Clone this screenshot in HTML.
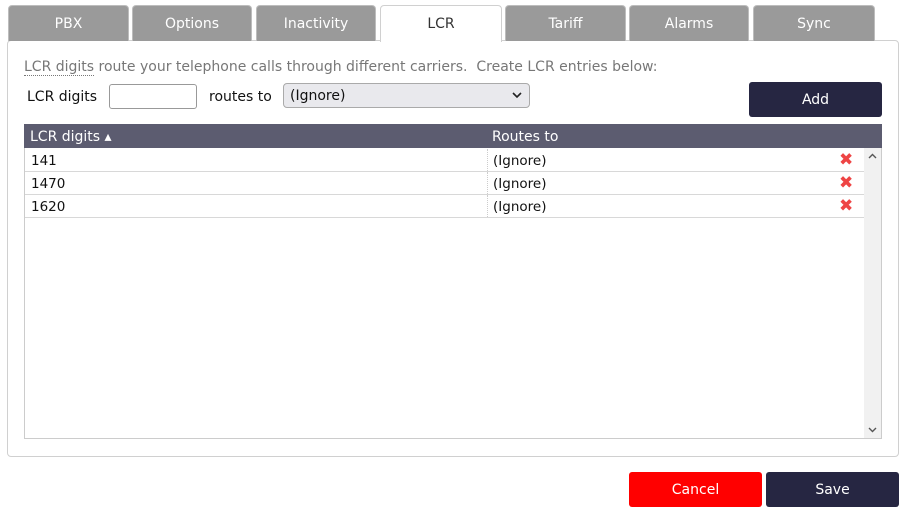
<!DOCTYPE html><html><head><style>
body{margin:0;width:905px;height:513px;background:#fff;font-family:"DejaVu Sans","Liberation Sans",sans-serif;font-size:14px;color:#111;position:relative;overflow:hidden}
.a{position:absolute;box-sizing:border-box}
.tab{top:5px;height:36px;background:#9a9a9a;color:#fff;border:1px solid #bdbdbd;border-bottom:none;border-radius:4px 4px 0 0;text-align:center;line-height:37px;font-size:14px}
.row{left:25px;width:839px;height:23px;border-bottom:1px solid #d8d8d8;line-height:24px;font-size:13.5px}
.x{color:#ee4444;font-weight:bold;font-size:17px;position:absolute;left:814px;top:0;line-height:23px}
</style></head><body>
<div class="a" style="left:7px;top:40px;width:892px;height:417px;border:1px solid #d0d0d0;border-radius:4px"></div>
<div class="a tab" style="left:8px;width:121px">PBX</div>
<div class="a tab" style="left:132px;width:120px">Options</div>
<div class="a tab" style="left:256px;width:120px">Inactivity</div>
<div class="a tab" style="left:380px;width:122px;background:#fff;color:#333;height:37px;border-color:#d0d0d0">LCR</div>
<div class="a tab" style="left:505px;width:121px">Tariff</div>
<div class="a tab" style="left:629px;width:120px">Alarms</div>
<div class="a tab" style="left:753px;width:122px">Sync</div>
<div class="a" style="left:24px;top:59px;color:#777;font-size:14px;white-space:nowrap"><span style="border-bottom:1px dotted #777">LCR digits</span> route your telephone calls through different carriers.&nbsp; Create LCR entries below:</div>
<div class="a" style="left:27px;top:89px">LCR digits</div>
<div class="a" style="left:109px;top:84px;width:88px;height:25px;border:1px solid #999;border-radius:3px"></div>
<div class="a" style="left:209px;top:89px">routes to</div>
<div class="a" style="left:283px;top:83px;width:247px;height:25px;border:1px solid #aaa;border-radius:4px;background:#e9e9ed;padding:4px 6px">(Ignore)<svg style="position:absolute;right:7px;top:8px" width="10" height="7"><path d="M1 1L5 5L9 1" stroke="#222" stroke-width="1.6" fill="none"/></svg></div>
<div class="a" style="left:749px;top:82px;width:133px;height:35px;background:#262642;color:#fff;border-radius:3px;text-align:center;line-height:36px;font-size:14px">Add</div>
<div class="a" style="left:24px;top:124px;width:858px;height:315px;border:1px solid #ccc"></div>
<div class="a" style="left:24px;top:124px;width:858px;height:24px;background:#5c5c70;color:#fff;line-height:27px;font-size:14px"><span style="margin-left:6px">LCR digits ▴</span><span style="position:absolute;left:468px">Routes to</span></div>
<div class="a" style="left:864px;top:148px;width:17px;height:290px;background:#f1f1f1"><svg style="position:absolute;left:4px;top:5px" width="9" height="6"><path d="M1 5L4.5 1.5L8 5" stroke="#555" stroke-width="1.4" fill="none"/></svg><svg style="position:absolute;left:4px;bottom:5px" width="9" height="6"><path d="M1 1L4.5 4.5L8 1" stroke="#555" stroke-width="1.4" fill="none"/></svg></div>
<div class="a row" style="top:149px"><span style="margin-left:6px">141</span><span style="position:absolute;left:462px;border-left:1px dotted #ccc;padding-left:5px;height:22px">(Ignore)</span><span class="x">✖</span></div>
<div class="a row" style="top:172px"><span style="margin-left:6px">1470</span><span style="position:absolute;left:462px;border-left:1px dotted #ccc;padding-left:5px;height:22px">(Ignore)</span><span class="x">✖</span></div>
<div class="a row" style="top:195px"><span style="margin-left:6px">1620</span><span style="position:absolute;left:462px;border-left:1px dotted #ccc;padding-left:5px;height:22px">(Ignore)</span><span class="x">✖</span></div>
<div class="a" style="left:629px;top:472px;width:133px;height:35px;background:#ff0000;color:#fff;border-radius:3px;text-align:center;line-height:36px;font-size:14px">Cancel</div>
<div class="a" style="left:766px;top:472px;width:133px;height:35px;background:#262642;color:#fff;border-radius:3px;text-align:center;line-height:36px;font-size:14px">Save</div>
</body></html>
